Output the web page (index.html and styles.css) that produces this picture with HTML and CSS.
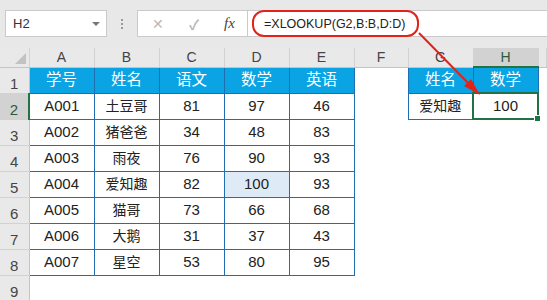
FILE: index.html
```html
<!DOCTYPE html>
<html lang="zh-CN">
<head>
  <meta charset="UTF-8">
  <title>XLOOKUP</title>
  <link rel="stylesheet" href="styles.css">
</head>
<body>

  <div class="toolbar">
    <div class="name-box">
      <span>H2</span>
      <span class="caret"></span>
    </div>
    <div class="dots"><i></i><i></i><i></i></div>
    <div class="fx-box">
      <span class="fx-btn cancel">✕</span>
      <span class="fx-btn ok">✓</span>
      <span class="fx">fx</span>
    </div>
    <div class="formula">
      <span class="ring">=XLOOKUP(G2,B:B,D:D)</span>
    </div>
  </div>

  <table class="sheet">
    <colgroup>
      <col class="c-row">
      <col class="c-std"><col class="c-std"><col class="c-std"><col class="c-std"><col class="c-std">
      <col class="c-f">
      <col class="c-std"><col class="c-std">
      <col>
    </colgroup>
    <tr class="col-head">
      <th class="corner"><span class="tri"></span></th>
      <th>A</th><th>B</th><th>C</th><th>D</th><th>E</th><th>F</th><th>G</th><th class="active">H</th><th></th>
    </tr>
    <tr>
      <th class="row-head">1</th>
      <td class="b hd">学号</td><td class="b hd">姓名</td><td class="b hd">语文</td><td class="b hd">数学</td><td class="b hd">英语</td>
      <td></td>
      <td class="b hd">姓名</td><td class="b hd">数学</td><td></td>
    </tr>
    <tr>
      <th class="row-head active">2</th>
      <td class="b">A001</td><td class="b cn">土豆哥</td><td class="b">81</td><td class="b">97</td><td class="b">46</td>
      <td></td>
      <td class="b cn">爱知趣</td><td class="sel">100<span class="handle"></span></td><td></td>
    </tr>
    <tr>
      <th class="row-head">3</th>
      <td class="b">A002</td><td class="b cn">猪爸爸</td><td class="b">34</td><td class="b">48</td><td class="b">83</td>
      <td></td><td></td><td></td><td></td>
    </tr>
    <tr>
      <th class="row-head">4</th>
      <td class="b">A003</td><td class="b cn">雨夜</td><td class="b">76</td><td class="b">90</td><td class="b">93</td>
      <td></td><td></td><td></td><td></td>
    </tr>
    <tr>
      <th class="row-head">5</th>
      <td class="b">A004</td><td class="b cn">爱知趣</td><td class="b">82</td><td class="b found">100</td><td class="b">93</td>
      <td></td><td></td><td></td><td></td>
    </tr>
    <tr>
      <th class="row-head">6</th>
      <td class="b">A005</td><td class="b cn">猫哥</td><td class="b">73</td><td class="b">66</td><td class="b">68</td>
      <td></td><td></td><td></td><td></td>
    </tr>
    <tr>
      <th class="row-head">7</th>
      <td class="b">A006</td><td class="b cn">大鹅</td><td class="b">31</td><td class="b">37</td><td class="b">43</td>
      <td></td><td></td><td></td><td></td>
    </tr>
    <tr>
      <th class="row-head">8</th>
      <td class="b">A007</td><td class="b cn">星空</td><td class="b">53</td><td class="b">80</td><td class="b">95</td>
      <td></td><td></td><td></td><td></td>
    </tr>
    <tr>
      <th class="row-head">9</th>
      <td></td><td></td><td></td><td></td><td></td><td></td><td></td><td></td><td></td>
    </tr>
  </table>

  <!-- annotation arrow from the formula to the result cell -->
  <svg class="arrow" width="547" height="300" viewBox="0 0 547 300">
    <line x1="419" y1="33" x2="472" y2="87" stroke="#e2231a" stroke-width="2"/>
    <polygon points="480,95 464,86 471,79" fill="#e2231a"/>
  </svg>

</body>
</html>
```

FILE: styles.css
```css
body {
  margin: 0;
  width: 547px;
  height: 300px;
  overflow: hidden;
  background: #ffffff;
  font-family: "Liberation Sans", "Noto Sans CJK SC", sans-serif;
  color: #222;
  position: relative;
}

/* formula bar */
.toolbar {
  display: flex;
  align-items: flex-start;
  height: 48px;
  box-sizing: border-box;
  padding: 10px 0 0 5px;
  background: #e8e8e8;
}

.name-box {
  width: 102px;
  height: 27px;
  box-sizing: border-box;
  border: 1px solid #cacaca;
  background: #fff;
  display: flex;
  align-items: center;
  justify-content: space-between;
  padding: 0 6px 0 7px;
  font-size: 13px;
  color: #333;
}

.caret {
  width: 0;
  height: 0;
  border-left: 4px solid transparent;
  border-right: 4px solid transparent;
  border-top: 4px solid #777;
}

.dots {
  width: 30px;
  height: 27px;
  display: flex;
  flex-direction: column;
  align-items: center;
  justify-content: center;
  gap: 2px;
}

.dots i {
  width: 2px;
  height: 2px;
  background: #9a9a9a;
}

.fx-box {
  width: 110px;
  height: 27px;
  box-sizing: border-box;
  border: 1px solid #cacaca;
  border-right: none;
  background: #fff;
  display: flex;
  align-items: center;
}

.fx-btn {
  width: 36px;
  text-align: center;
  color: #b8b8b8;
  font-size: 14px;
}

.cancel {
  margin-left: 2px;
}

.ok {
  font-weight: bold;
}

.fx {
  margin-left: 12px;
  font-family: "Liberation Serif", serif;
  font-style: italic;
  font-size: 15px;
  color: #444;
}

.formula {
  flex: 1;
  height: 27px;
  box-sizing: border-box;
  border: 1px solid #cacaca;
  border-right: none;
  background: #fff;
  padding: 0 0 0 4px;
}

.ring {
  display: inline-flex;
  align-items: center;
  height: 27px;
  margin-top: -1px;
  box-sizing: border-box;
  padding: 0 12px 0 10px;
  border: 2px solid #e2231a;
  border-radius: 12px;
  font-size: 12.5px;
  color: #222;
}

/* grid */
.sheet {
  border-collapse: collapse;
  table-layout: fixed;
  width: 547px;
}

.c-row { width: 29px; }
.c-std { width: 65px; }
.c-f { width: 54px; }

.sheet tr {
  height: 26px;
}

.sheet tr.col-head {
  height: 19px;
}

.sheet td,
.sheet th {
  padding: 0;
  line-height: 18px;
  text-align: center;
  font-weight: normal;
  white-space: nowrap;
  font-size: 15px;
}

.col-head th {
  background: #e9e9e9;
  border-right: 1px solid #d2d2d2;
  border-bottom: 1px solid #c4c4c4;
  font-size: 14px;
  color: #444;
}

.col-head th.active {
  background: #d2d2d2;
  border-bottom: 2px solid #217346;
  color: #2a5a3c;
}

.corner {
  position: relative;
}

.tri {
  position: absolute;
  right: 3px;
  bottom: 3px;
  width: 0;
  height: 0;
  border-left: 11px solid transparent;
  border-bottom: 11px solid #c2c2c2;
}

.row-head {
  background: #e9e9e9;
  border-right: 1px solid #c4c4c4;
  border-bottom: 1px solid #d2d2d2;
  color: #444;
  vertical-align: bottom;
}

.row-head.active {
  background: #d2d2d2;
  border-right: 2px solid #217346;
  color: #2a5a3c;
}

.b {
  border: 1px solid #1f6eb0;
}

.hd {
  background: #0aa4e4;
  color: #fff;
  font-size: 15.5px !important;
}

.cn {
  font-size: 14px !important;
}

.found {
  background: #deebf7;
}

.sel {
  position: relative;
  border: 2px solid #217346;
}

.handle {
  position: absolute;
  right: -4px;
  bottom: -4px;
  width: 5px;
  height: 5px;
  background: #217346;
  border: 1px solid #fff;
}

.arrow {
  position: absolute;
  left: 0;
  top: 0;
  pointer-events: none;
}
```
